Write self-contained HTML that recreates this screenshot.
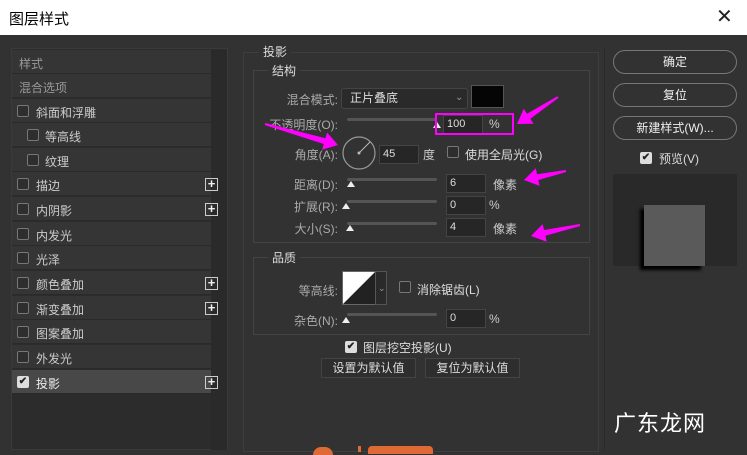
<!DOCTYPE html>
<html><head><meta charset="utf-8"><style>
*{margin:0;padding:0;box-sizing:border-box}
body{width:747px;height:450px;background:#323232;font-family:"Liberation Sans","Noto Sans CJK SC",sans-serif;color:#ccc;font-size:12px;position:relative;overflow:hidden}
.a{position:absolute;white-space:nowrap}
.t{position:absolute;top:0;left:0;width:747px;height:35px;background:#fff;color:#000;font-size:15px}
.row{position:absolute;left:12px;width:199px;height:24px;background:#353535;border-bottom:1px solid #2a2a2a}
.cb{position:absolute;width:12px;height:12px;border:1px solid #777;border-radius:2px;background:#2e2e2e}
.cbk{position:absolute;width:12px;height:12px;border-radius:2px;background:#ddd;color:#222;font-size:10px;line-height:12px;text-align:center;font-weight:bold}
.plus{position:absolute;left:193px;top:6px;width:13px;height:13px;border:1px solid #ccc;color:#eee;font-size:13px;line-height:10px;text-align:center;font-weight:bold}
.inp{position:absolute;height:19px;background:#262626;border:1px solid #444;color:#ddd;padding-left:3px;line-height:17px;font-size:11px}
.lbl{position:absolute;text-align:right;width:100px;color:#aaa;font-size:12px}
.sl{position:absolute;height:3px;background:#555;border-radius:2px}
.th{position:absolute;width:0;height:0;border-left:4px solid transparent;border-right:4px solid transparent;border-bottom:6px solid #eee}
.btn{position:absolute;border:1px solid #777;border-radius:12px;color:#eee;text-align:center;font-size:12px;line-height:22px;height:24px}
.fs{position:absolute;border:1px solid #444}
</style></head><body>
<div class="t"><span class="a" style="left:9px;top:8px">图层样式</span><span class="a" style="left:716px;top:4px;font-size:20px;color:#222">✕</span></div>
<div class="a" style="left:11px;top:48px;width:217px;height:402px;background:#2c2c2c;border:1px solid #3a3a3a"></div>
<div class="a" style="left:211px;top:50px;width:16px;height:400px;background:#2a2a2a"></div>
<div class="row" style="top:50px"><span class="a" style="left:7px;top:5px;color:#999">样式</span></div>
<div class="row" style="top:74px"><span class="a" style="left:7px;top:5px;color:#999">混合选项</span></div>
<div class="row" style="top:99px"><div class="cb" style="left:5px;top:6px"></div><span class="a" style="left:24px;top:5px">斜面和浮雕</span></div>
<div class="row" style="top:123px"><div class="cb" style="left:15px;top:6px"></div><span class="a" style="left:33px;top:5px">等高线</span></div>
<div class="row" style="top:148px"><div class="cb" style="left:15px;top:6px"></div><span class="a" style="left:33px;top:5px">纹理</span></div>
<div class="row" style="top:172px"><div class="cb" style="left:5px;top:6px"></div><span class="a" style="left:24px;top:5px">描边</span><div class="plus">+</div></div>
<div class="row" style="top:197px"><div class="cb" style="left:5px;top:6px"></div><span class="a" style="left:24px;top:5px">内阴影</span><div class="plus">+</div></div>
<div class="row" style="top:222px"><div class="cb" style="left:5px;top:6px"></div><span class="a" style="left:24px;top:5px">内发光</span></div>
<div class="row" style="top:246px"><div class="cb" style="left:5px;top:6px"></div><span class="a" style="left:24px;top:5px">光泽</span></div>
<div class="row" style="top:271px"><div class="cb" style="left:5px;top:6px"></div><span class="a" style="left:24px;top:5px">颜色叠加</span><div class="plus">+</div></div>
<div class="row" style="top:296px"><div class="cb" style="left:5px;top:6px"></div><span class="a" style="left:24px;top:5px">渐变叠加</span><div class="plus">+</div></div>
<div class="row" style="top:320px"><div class="cb" style="left:5px;top:6px"></div><span class="a" style="left:24px;top:5px">图案叠加</span></div>
<div class="row" style="top:345px"><div class="cb" style="left:5px;top:6px"></div><span class="a" style="left:24px;top:5px">外发光</span></div>
<div class="row" style="top:370px;background:#484848"><div class="cbk" style="left:5px;top:6px">✔</div><span class="a" style="left:24px;top:5px;color:#eee">投影</span><div class="plus">+</div></div>

<div class="fs" style="left:243px;top:52px;width:356px;height:400px;border-color:#3e3e3e"></div>
<span class="a" style="left:259px;top:43px;background:#323232;padding:0 4px;color:#ddd">投影</span>
<div class="fs" style="left:253px;top:70px;width:337px;height:173px"></div>
<span class="a" style="left:268px;top:62px;background:#323232;padding:0 4px;color:#ddd">结构</span>
<div class="lbl" style="left:238px;top:91px">混合模式:</div>
<div class="inp" style="left:341px;top:88px;width:127px;height:21px;border-radius:3px;background:#2a2a2a;font-size:12px;line-height:19px;padding-left:8px">正片叠底<span class="a" style="left:113px;top:-1px;color:#999;font-size:10px">⌄</span></div>
<div class="a" style="left:471px;top:85px;width:33px;height:23px;background:#050505;border:1px solid #555"></div>
<div class="lbl" style="left:238px;top:116px">不透明度(O):</div>
<div class="sl" style="left:347px;top:118px;width:90px"></div><div class="th" style="left:433px;top:122px"></div>
<div class="inp" style="left:443px;top:115px;width:40px">100</div><span class="a" style="left:489px;top:117px">%</span>
<div class="a" style="left:435px;top:113px;width:79px;height:22px;border:2px solid #f0f"></div>
<div class="lbl" style="left:238px;top:146px">角度(A):</div>
<svg class="a" style="left:341px;top:135px" width="36" height="36"><circle cx="18" cy="18" r="16" fill="none" stroke="#999" stroke-width="1.2"/><line x1="18" y1="18" x2="29" y2="7" stroke="#bbb"/><circle cx="18" cy="18" r="1.5" fill="#bbb"/></svg>
<div class="inp" style="left:379px;top:145px;width:40px">45</div><span class="a" style="left:423px;top:146px">度</span>
<div class="cb" style="left:447px;top:146px"></div><span class="a" style="left:465px;top:146px;color:#ddd">使用全局光(G)</span>
<div class="lbl" style="left:238px;top:176px">距离(D):</div>
<div class="sl" style="left:347px;top:178px;width:90px"></div><div class="th" style="left:347px;top:181px"></div>
<div class="inp" style="left:446px;top:174px;width:40px">6</div><span class="a" style="left:493px;top:176px">像素</span>
<div class="lbl" style="left:238px;top:198px">扩展(R):</div>
<div class="sl" style="left:347px;top:200px;width:90px"></div><div class="th" style="left:342px;top:203px"></div>
<div class="inp" style="left:446px;top:196px;width:40px">0</div><span class="a" style="left:489px;top:198px">%</span>
<div class="lbl" style="left:238px;top:220px">大小(S):</div>
<div class="sl" style="left:347px;top:222px;width:90px"></div><div class="th" style="left:346px;top:225px"></div>
<div class="inp" style="left:446px;top:218px;width:40px">4</div><span class="a" style="left:493px;top:220px">像素</span>

<div class="fs" style="left:253px;top:257px;width:337px;height:78px"></div>
<span class="a" style="left:268px;top:249px;background:#323232;padding:0 4px;color:#ddd">品质</span>
<div class="lbl" style="left:238px;top:282px">等高线:</div>
<svg class="a" style="left:342px;top:271px" width="46" height="34"><rect x="0.5" y="0.5" width="33" height="33" fill="#fff" stroke="#666"/><polygon points="1,33 33,1 33,33" fill="#222"/><rect x="33.5" y="0.5" width="11" height="33" fill="#2a2a2a" stroke="#555"/><text x="36" y="20" fill="#999" font-size="9">⌄</text></svg>
<div class="cb" style="left:399px;top:281px"></div><span class="a" style="left:417px;top:281px;color:#ddd">消除锯齿(L)</span>
<div class="lbl" style="left:238px;top:312px">杂色(N):</div>
<div class="sl" style="left:347px;top:313px;width:90px"></div><div class="th" style="left:342px;top:317px"></div>
<div class="inp" style="left:446px;top:309px;width:40px">0</div><span class="a" style="left:489px;top:312px">%</span>
<div class="cbk" style="left:345px;top:341px">✔</div><span class="a" style="left:363px;top:339px;color:#ddd">图层挖空投影(U)</span>
<div class="a" style="left:321px;top:358px;width:95px;height:20px;border:1px solid #444;background:#2e2e2e;text-align:center;line-height:18px;color:#ddd">设置为默认值</div>
<div class="a" style="left:425px;top:358px;width:95px;height:20px;border:1px solid #444;background:#2e2e2e;text-align:center;line-height:18px;color:#ddd">复位为默认值</div>
<span class="a" style="left:313px;top:447px;width:20px;height:8px;border-radius:8px 8px 0 0;background:#e06a35"></span>
<span class="a" style="left:358px;top:446px;width:3px;height:6px;background:#e06a35"></span>
<span class="a" style="left:368px;top:446px;width:65px;height:8px;border-radius:4px 4px 0 0;background:#e06a35"></span>

<div class="a" style="left:604px;top:48px;width:1px;height:402px;background:#2a2a2a"></div>
<div class="btn" style="left:613px;top:50px;width:124px">确定</div>
<div class="btn" style="left:613px;top:83px;width:124px">复位</div>
<div class="btn" style="left:613px;top:116px;width:124px">新建样式(W)...</div>
<div class="cbk" style="left:640px;top:152px">✔</div><span class="a" style="left:659px;top:150px;color:#ddd">预览(V)</span>
<div class="a" style="left:613px;top:174px;width:124px;height:92px;background:#292929"></div>
<div class="a" style="left:644px;top:205px;width:61px;height:61px;background:#5a5a5a;box-shadow:-4px 4px 3px #000"></div>
<span class="a" style="left:614px;top:406px;font-size:22px;color:#fff;letter-spacing:1px">广东龙网</span>

<svg class="a" style="left:0;top:0" width="747" height="450">
<g fill="#f0f">
<polygon points="517,124 523.7,108.8 527,113.8 557.4,96.2 558.6,97.8 530.4,118.8 533.6,123.8"/>
<polygon points="338,145 327.1,132.5 325.4,138.2 265.3,123 264.7,125 323.8,144 322.1,149.7"/>
<polygon points="524,180 535.8,168.3 537.1,174.2 565.8,170 566.2,172 538.3,180 539.6,185.9"/>
<polygon points="531,236 542.7,224.1 544,230 579.8,224 580.2,226 545.4,235.8 546.7,241.7"/>
</g></svg>
</body></html>
